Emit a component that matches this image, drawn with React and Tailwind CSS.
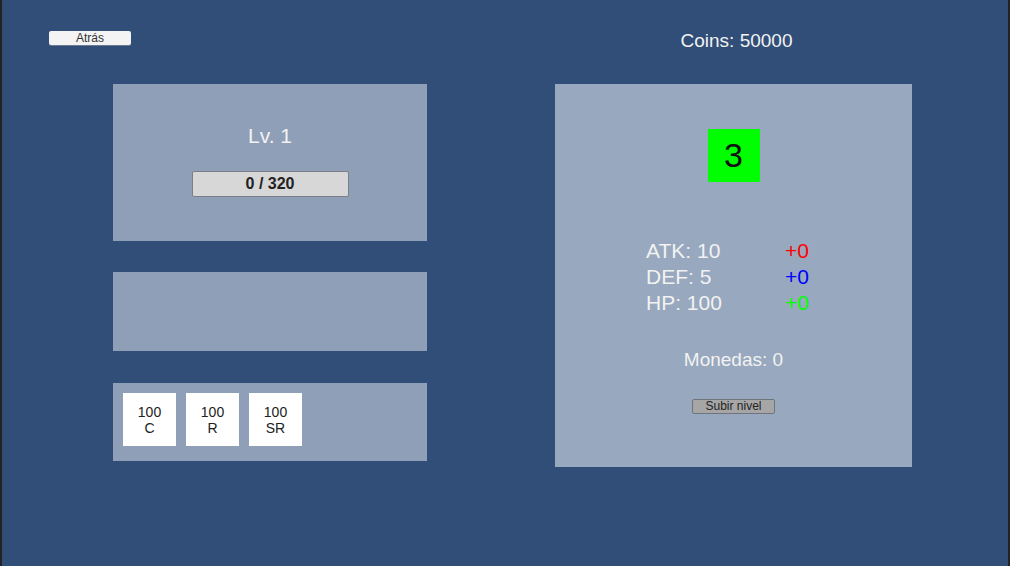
import React from "react";

const cards = [
  { cost: 100, rarity: "C" },
  { cost: 100, rarity: "R" },
  { cost: 100, rarity: "SR" },
];

const stats = [
  { label: "ATK: 10", bonus: "+0", color: "text-[#ff0000]" },
  { label: "DEF: 5", bonus: "+0", color: "text-[#0000ff]" },
  { label: "HP: 100", bonus: "+0", color: "text-[#00ff00]" },
];

export default function App() {
  return (
    <div className="w-[1010px] h-[566px] bg-[#232323] px-[2px] font-['Liberation_Sans',Arial,sans-serif]">
      <div className="h-full bg-[#304e78] flex">
        {/* columna izquierda */}
        <div className="w-[425px] flex flex-col">
          <div className="h-[84px] pt-[31px] pl-[47px]">
            <button className="block w-[82px] h-[14px] bg-[#f4f4f4] rounded-[2px] text-[12px] leading-[14px] text-[#333] shadow-[0_1px_0_#6b7a90]">
              Atrás
            </button>
          </div>
          <div className="ml-[111px] w-[314px] flex flex-col">
            <section className="h-[157px] bg-[#8f9fb7] flex flex-col items-center pt-[40px]">
              <div className="text-[21px] leading-[24px] text-[#f2f2f2]">Lv. 1</div>
              <div className="mt-[23px] w-[157px] h-[26px] bg-[#d7d7d7] border border-[#7a7f88] rounded-[2px] flex items-center justify-center text-[16px] font-bold text-[#222]">
                0 / 320
              </div>
            </section>
            <section className="mt-[31px] h-[79px] bg-[#8f9fb7]" />
            <section className="mt-[32px] h-[78px] bg-[#8f9fb7] flex gap-[10px] pl-[10px] pt-[10px]">
              {cards.map((c) => (
                <div key={c.rarity} className="w-[53px] h-[53px] bg-white flex flex-col items-center justify-center text-[14px] leading-[16px] text-[#222]">
                  <span>{c.cost}</span>
                  <span>{c.rarity}</span>
                </div>
              ))}
            </section>
          </div>
        </div>

        {/* columna derecha */}
        <div className="ml-[128px] w-[357px] flex flex-col">
          <div className="h-[84px] pt-[30px] pl-[6px] text-center text-[19px] leading-[22px] text-[#f2f2f2]">Coins: 50000</div>
          <section className="h-[383px] bg-[#98a8be] flex flex-col items-center pt-[45px]">
            <div className="w-[52px] h-[53px] bg-[#00ff00] flex items-center justify-center text-[34px] text-[#111]">3</div>
            <div className="mt-[56px] w-[357px] pl-[91px] flex flex-col">
              {stats.map((s) => (
                <div key={s.label} className="flex h-[26px] items-center text-[21px]">
                  <span className="w-[139px] text-[#f2f2f2]">{s.label}</span>
                  <span className={s.color}>{s.bonus}</span>
                </div>
              ))}
            </div>
            <div className="mt-[33px] text-[19px] leading-[22px] text-[#f2f2f2]">Monedas: 0</div>
            <button className="block mt-[28px] w-[83px] h-[15px] bg-[#a6a6a6] border border-[#6f747c] rounded-[2px] text-[12px] leading-[13px] text-[#222]">
              Subir nivel
            </button>
          </section>
        </div>
      </div>
    </div>
  );
}
